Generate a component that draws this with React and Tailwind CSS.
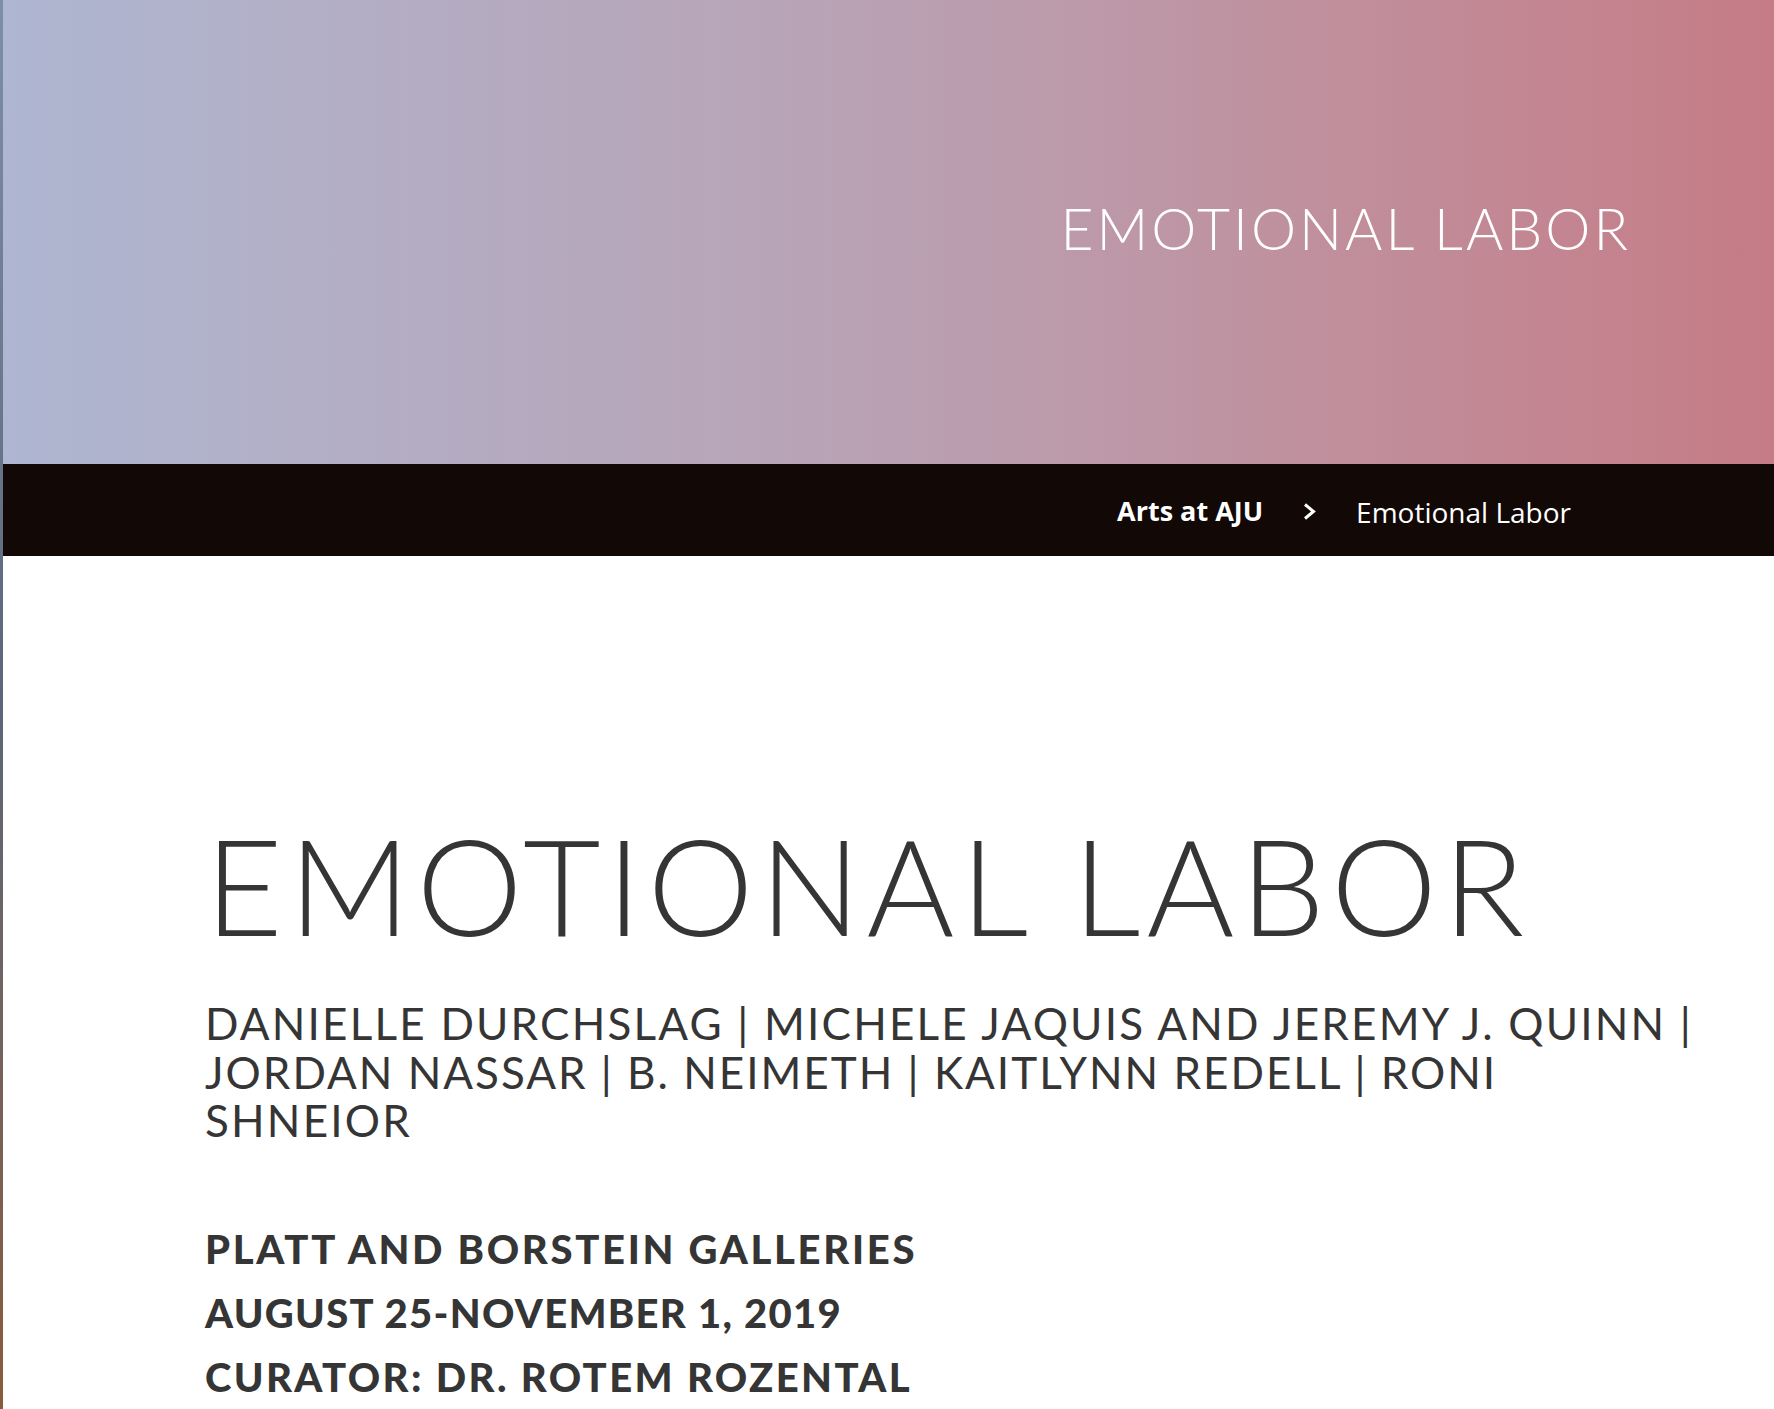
import React from "react";

function Chevron() {
  return (
    <svg width="13" height="17" viewBox="0 0 13 17" className="block">
      <polyline points="2,1.5 10.5,8.5 2,15.5" fill="none" stroke="#ffffff" strokeWidth="3" strokeLinecap="butt" strokeLinejoin="miter" />
    </svg>
  );
}

export default function App() {
  const lato = { fontFamily: 'Lato, "Noto Sans", sans-serif' };
  return (
    <div className="flex min-h-[1409px] w-full bg-white">
      <div className="w-[3px] shrink-0 bg-linear-to-b from-[#7f8ea8] via-[#5b6678] to-[#8a5a3a]" />
      <div className="flex-1 min-w-0 flex flex-col">
        <header className="h-[464px] bg-linear-to-r from-[#aeb6d1] via-[#b9a1b3] to-[#c57c86] flex justify-end pr-[143px] pt-[200px]">
          <h2
            className="text-white text-[57px] leading-[57px] font-light tracking-[3px] h-fit whitespace-nowrap"
            style={lato}
          >
            EMOTIONAL LABOR
          </h2>
        </header>
        <nav className="h-[92px] bg-[#120806] flex items-center justify-end pr-[203px] pt-[3px]" style={{ fontFamily: '"Open Sans", sans-serif' }}>
          <span className="text-white text-[27px] font-bold">Arts at AJU</span>
          <span className="mx-[40px] flex items-center"><Chevron /></span>
          <span className="text-white text-[28px]">Emotional Labor</span>
        </nav>
        <main className="pl-[202px] pt-[262px] text-[#353535]" style={lato}>
          <h1 className="text-[134px] leading-[134px] font-light tracking-[6px] whitespace-nowrap">EMOTIONAL LABOR</h1>
          <div className="mt-[47px] text-[44px] leading-[48.5px] font-normal tracking-[2.2px]">
            <div className="whitespace-nowrap">DANIELLE DURCHSLAG | MICHELE JAQUIS AND JEREMY J. QUINN |</div>
            <div className="whitespace-nowrap tracking-[2px]">JORDAN NASSAR | B. NEIMETH | KAITLYNN REDELL | RONI</div>
            <div className="whitespace-nowrap">SHNEIOR</div>
          </div>
          <div className="mt-[72px] text-[40px] leading-[64px] font-black">
            <div className="whitespace-nowrap tracking-[2.7px]">PLATT AND BORSTEIN GALLERIES</div>
            <div className="whitespace-nowrap tracking-[1.3px]">AUGUST 25-NOVEMBER 1, 2019</div>
            <div className="whitespace-nowrap tracking-[2.4px]">CURATOR: DR. ROTEM ROZENTAL</div>
          </div>
        </main>
      </div>
    </div>
  );
}
